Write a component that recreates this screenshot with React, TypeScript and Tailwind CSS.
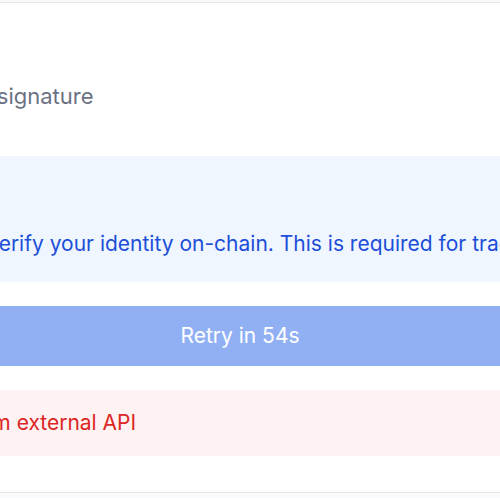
import React from 'react';

const App = () => {
    return (
        <div
            className="w-[500px] h-[498px] overflow-hidden bg-gray-50 pt-[2px]"
            style={{ fontFamily: 'Inter, "Noto Sans", sans-serif' }}
        >
            <div className="ml-[-260px] w-[1000px] bg-white border border-gray-200 px-8 pt-[79px] pb-[36px]">
                {/* Status */}
                <div className="flex items-center h-[28px] pl-[38px]">
                    <p className="text-[22px] leading-[28px] text-gray-500">Waiting for wallet signature</p>
                </div>

                {/* Info box */}
                <div className="mt-[46px] bg-blue-50 pl-[26px] pr-6 pt-[75px] pb-[25px]">
                    <p className="text-[21px] leading-[26px] text-[#1d4ed8]">
                        Sign a message to verify your identity on-chain. This is required for trading.
                    </p>
                </div>

                {/* Retry button */}
                <button
                    disabled
                    className="mt-6 w-full h-[60px] bg-[#2563eb] opacity-50 text-white text-[21px]"
                >
                    Retry in 54s
                </button>

                {/* Error */}
                <div className="mt-6 bg-red-50 pl-[45px] pr-6 py-5">
                    <p className="text-[21px] leading-[26px] text-[#dc2626]">Failed to fetch from external API</p>
                </div>
            </div>
        </div>
    );
};

export default App;
